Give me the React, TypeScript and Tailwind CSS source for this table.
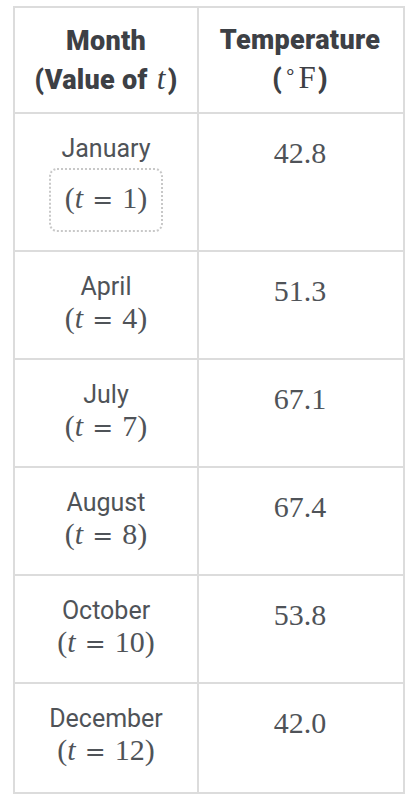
import React from "react";

const serif = { fontFamily: '"Liberation Serif", "Times New Roman", serif' };
const eqFont = { fontFamily: '"DejaVu Serif", "Liberation Serif", serif' };

function MathT({ n }: { n: number }) {
  return (
    <span className="whitespace-nowrap" style={serif}>
      (<i>t</i>
      <span className="mx-[9px] text-[25px]" style={eqFont}>
        =
      </span>
      {n})
    </span>
  );
}

const rows = [
  { m: "January", t: 1, v: "42.8" },
  { m: "April", t: 4, v: "51.3" },
  { m: "July", t: 7, v: "67.1" },
  { m: "August", t: 8, v: "67.4" },
  { m: "October", t: 10, v: "53.8" },
  { m: "December", t: 12, v: "42.0" },
];

export default function App() {
  return (
    <div
      className="w-[416px] h-[804px] bg-white pt-[6px] pl-[13px]"
      style={{ fontFamily: 'Roboto, "Liberation Sans", sans-serif' }}
    >
      <div className="w-[392px] border-2 border-[#dcdcdc]">
        {/* header */}
        <div className="flex h-[104px]">
          <div className="w-[184px] border-r-2 border-[#dcdcdc] flex flex-col items-center justify-center pt-[2px] text-[27px] font-black tracking-[0.3px] text-[#3d4045] leading-[37px]">
            <div>Month</div>
            <div className="whitespace-nowrap">
              (Value of{" "}
              <i className="font-normal text-[31px] mx-[2px]" style={serif}>
                t
              </i>
              )
            </div>
          </div>
          <div className="w-[202px] flex flex-col items-center justify-center pt-[2px] text-[27px] font-black tracking-[0.3px] text-[#3d4045] leading-[37px]">
            <div>Temperature</div>
            <div className="whitespace-nowrap">
              (
              <span className="font-normal text-[31px] mx-[2px]" style={serif}>
                <span className="text-[20px] relative -top-[9px] mr-[1px]">∘</span>F
              </span>
              )
            </div>
          </div>
        </div>
        {rows.map((r, i) => (
          <div
            key={r.m}
            className={
              "flex border-t-2 border-[#dcdcdc] " +
              (i === 0 ? "h-[138px]" : i === 5 ? "h-[110px]" : "h-[108px]")
            }
          >
            <div className="w-[184px] border-r-2 border-[#dcdcdc] flex flex-col items-center pt-[19px] text-[#4f5358]">
              <div className="text-[25px] leading-[31px]">{r.m}</div>
              {i === 0 ? (
                <div className="mt-[4px] border-2 border-dotted border-[#c8c8c8] rounded-[8px] px-[14px] pt-[12px] pb-[15px] text-[30px] leading-[31px]">
                  <MathT n={r.t} />
                </div>
              ) : (
                <div className="text-[30px] leading-[31px]">
                  <MathT n={r.t} />
                </div>
              )}
            </div>
            <div
              className="w-[202px] flex justify-center pt-[23px] text-[30px] leading-[31px] text-[#4f5358]"
              style={serif}
            >
              {r.v}
            </div>
          </div>
        ))}
      </div>
    </div>
  );
}
